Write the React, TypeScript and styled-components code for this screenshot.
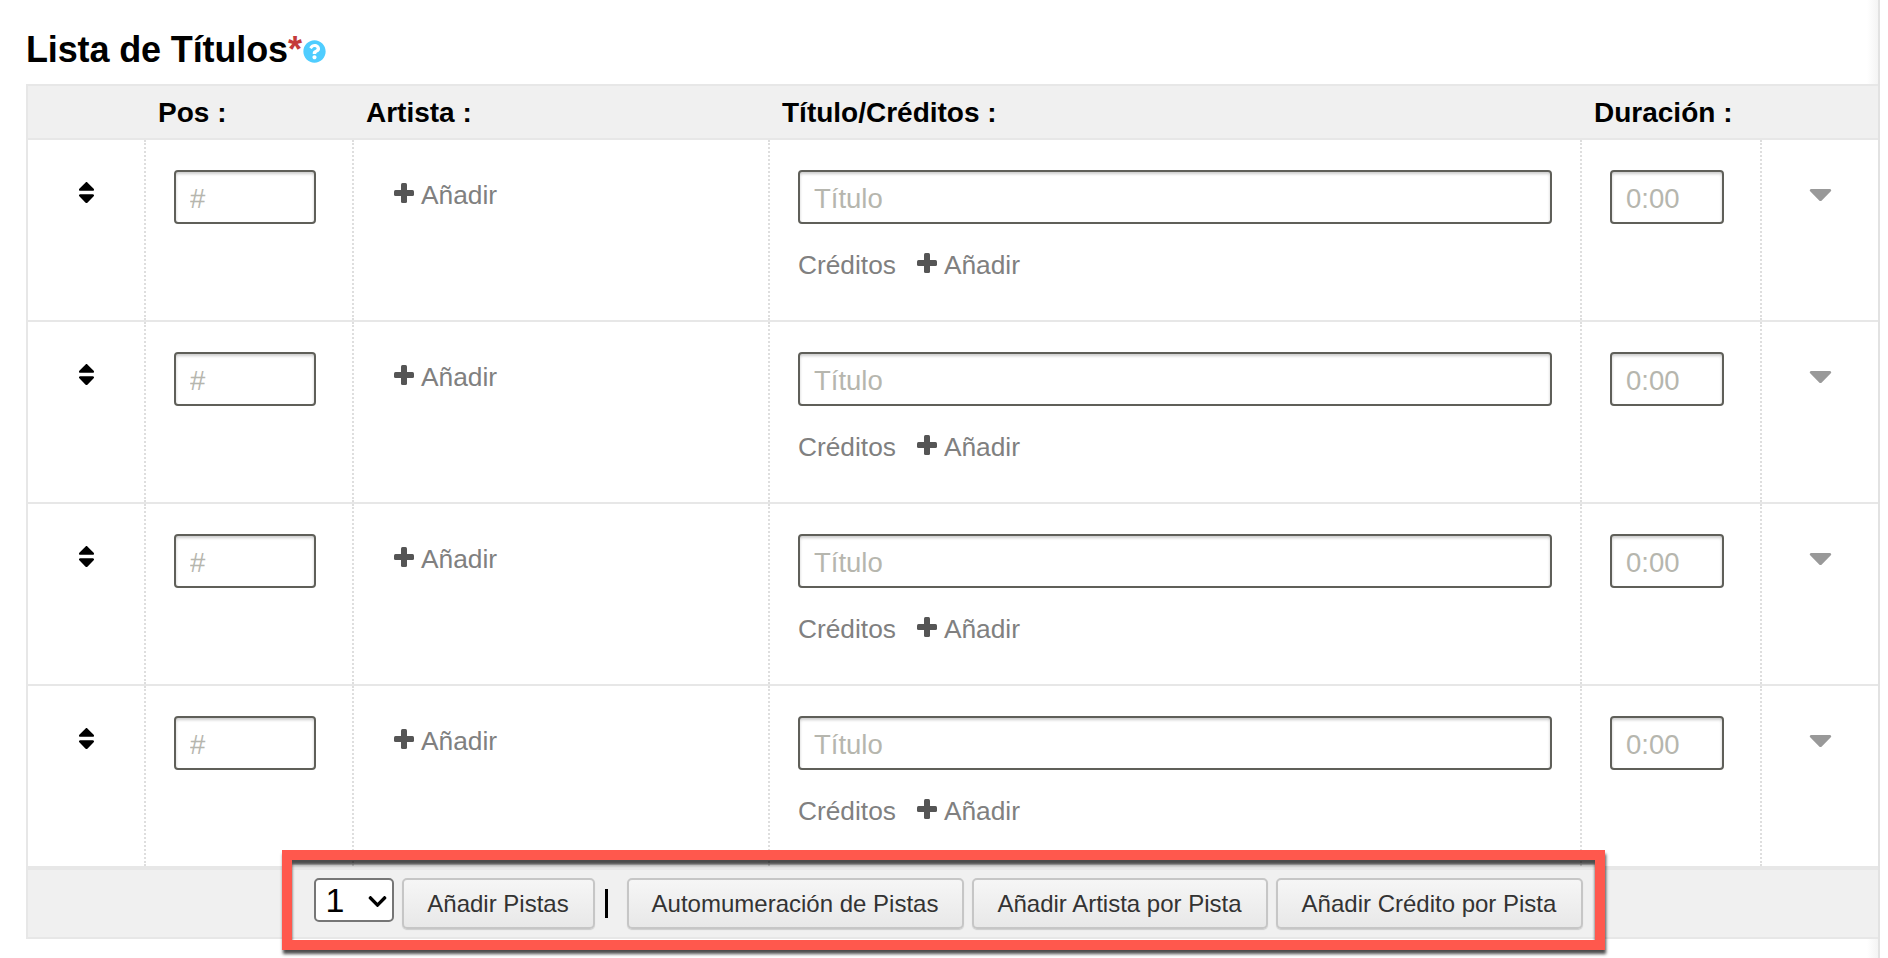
import React from "react";
import styled, { createGlobalStyle } from "styled-components";
import { FaCaretDown, FaChevronDown, FaQuestionCircle, FaSort } from "react-icons/fa";

const GlobalStyle = createGlobalStyle`
  html, body {
    margin: 0;
    padding: 0;
    background: #fff;
    overflow: hidden;
  }
  * {
    box-sizing: border-box;
  }
`;

const Page = styled.div`
  width: 1880px;
  height: 958px;
  padding: 28px 0 0 26px;
  border-right: 2px solid #e2e2e2;
  background: linear-gradient(to left, #f4f4f4, #fff 11px);
  font-family: "Liberation Sans", Arial, sans-serif;
  color: #000;
`;

const Heading = styled.h2`
  display: flex;
  align-items: center;
  height: 44px;
  margin: 0 0 12px;
  font-size: 36px;
  font-weight: 700;
  line-height: 44px;
  letter-spacing: -0.13px;
`;

const Star = styled.span`
  color: #c43a3a;
`;

const Help = styled(FaQuestionCircle)`
  width: 23px;
  height: 23px;
  margin: 3px 0 0 1px;
  color: #4fcdff;
`;

const Table = styled.div`
  position: relative;
  border-top: 2px solid #e7e7e7;
  border-left: 2px solid #e7e7e7;
  background: #fff;
`;

const columns = "116px 208px 416px 812px 180px 1fr";

const HeaderRow = styled.div`
  display: grid;
  grid-template-columns: ${columns};
  height: 54px;
  background: #f0f0f0;
  border-bottom: 2px solid #e7e7e7;
`;

const HeaderCell = styled.div`
  padding-left: 14px;
  font-size: 28px;
  font-weight: 700;
  line-height: 54px;
`;

const Row = styled.div`
  display: grid;
  grid-template-columns: ${columns};
  height: 182px;
  border-bottom: 2px solid #e7e7e7;

  &:last-of-type {
    height: 180px;
    border-bottom: 0;
  }
`;

const Cell = styled.div<{ $pad?: number }>`
  min-width: 0;
  padding: 30px 28px 0 ${(p) => p.$pad ?? 28}px;
  border-left: 2px dotted #dedede;
`;

const SortCell = styled.div`
  display: flex;
  justify-content: center;
  padding-top: 39px;
  font-size: 27px;
  line-height: 1;
`;

const CaretCell = styled(Cell)`
  display: flex;
  justify-content: center;
  padding: 35px 0 0;
  font-size: 37px;
  line-height: 1;
  color: #999;
`;

const TextInput = styled.input<{ $w?: number }>`
  display: block;
  width: ${(p) => (p.$w ? `${p.$w}px` : "100%")};
  height: 54px;
  padding: 4px 14px 0;
  border: 2px solid #5f5f59;
  border-radius: 4px;
  outline: 0;
  background: #fff;
  box-shadow: inset 0 2px 3px rgba(0, 0, 0, 0.2);
  font-family: inherit;
  font-size: 27.5px;
  color: #333;

  &::placeholder {
    color: #b6b6ae;
    opacity: 1;
  }
`;

const AddLink = styled.a`
  display: inline-flex;
  align-items: center;
  font-size: 26.3px;
  line-height: 30px;
  color: #808080;
`;

const PlusIcon = styled.svg`
  width: 20px;
  height: 20px;
  margin: -4px 7px 0 0;
  fill: #555;
`;

const ArtistAdd = styled.div`
  padding-top: 10px;
`;

const CreditsRow = styled.div`
  display: flex;
  align-items: center;
  gap: 21px;
  margin-top: 26px;
  font-size: 26.3px;
  line-height: 30px;
  color: #808080;
`;

const Footer = styled.div`
  position: relative;
  display: flex;
  justify-content: center;
  align-items: flex-start;
  height: 71px;
  padding: 8px 11px 0 0;
  background: #f0f0f0;
  border-top: 2px solid #e7e7e7;
  border-bottom: 2px solid #e7e7e7;
`;

const SelectWrap = styled.div`
  position: relative;
  width: 80px;
  height: 44px;
  margin: 0 8px 0 1px;

  svg {
    position: absolute;
    top: 13px;
    right: 6px;
    width: 21px;
    height: 21px;
    pointer-events: none;
  }
`;

const CountSelect = styled.select`
  width: 100%;
  height: 100%;
  padding: 0 0 0 10px;
  border: 2px solid #767676;
  border-radius: 5px;
  background: #fff;
  appearance: none;
  font-family: inherit;
  font-size: 34px;
  color: #000;
`;

const ActionButton = styled.button<{ $w: number }>`
  width: ${(p) => p.$w}px;
  height: 51px;
  padding: 0;
  border: 2px solid #c6c6c6;
  border-radius: 5px;
  background: linear-gradient(#f6f6f6, #e8e8e8);
  box-shadow: 0 1px 1px rgba(0, 0, 0, 0.15);
  font-family: inherit;
  font-size: 24px;
  color: #333;
`;

const Separator = styled.span`
  width: 3px;
  height: 29px;
  margin: 11px 19px 0 10px;
  background: #000;
`;

const ButtonGap = styled.span`
  width: 8px;
`;

// screenshot annotation sitting over the footer, not part of the form
const Highlight = styled.div`
  position: absolute;
  left: 254px;
  top: 764px;
  width: 1323px;
  height: 100px;
  border: 10px solid #ff584d;
  box-shadow: 1px 4px 3px rgba(0, 0, 0, 0.7), inset 0 5px 3px rgba(0, 0, 0, 0.7);
  pointer-events: none;
`;

const tracks = [0, 1, 2, 3];

function Add() {
  return (
    <AddLink>
      <PlusIcon viewBox="0 0 20 20">
        <rect x="7" y="0" width="6" height="20" rx="1.5" />
        <rect x="0" y="7" width="20" height="6" rx="1.5" />
      </PlusIcon>
      Añadir
    </AddLink>
  );
}

export default function App() {
  return (
    <Page>
      <GlobalStyle />
      <Heading>
        Lista de Títulos<Star>*</Star>
        <Help />
      </Heading>
      <Table>
        <HeaderRow>
          <span />
          <HeaderCell>Pos :</HeaderCell>
          <HeaderCell>Artista :</HeaderCell>
          <HeaderCell>Título/Créditos :</HeaderCell>
          <HeaderCell>Duración :</HeaderCell>
          <span />
        </HeaderRow>
        {tracks.map((t) => (
          <Row key={t}>
            <SortCell>
              <FaSort />
            </SortCell>
            <Cell>
              <TextInput placeholder="#" $w={142} />
            </Cell>
            <Cell $pad={40}>
              <ArtistAdd>
                <Add />
              </ArtistAdd>
            </Cell>
            <Cell>
              <TextInput placeholder="Título" />
              <CreditsRow>
                Créditos
                <Add />
              </CreditsRow>
            </Cell>
            <Cell>
              <TextInput placeholder="0:00" $w={114} />
            </Cell>
            <CaretCell>
              <FaCaretDown />
            </CaretCell>
          </Row>
        ))}
        <Footer>
          <SelectWrap>
            <CountSelect defaultValue="1">
              <option>1</option>
              <option>2</option>
              <option>3</option>
            </CountSelect>
            <FaChevronDown />
          </SelectWrap>
          <ActionButton $w={193}>Añadir Pistas</ActionButton>
          <Separator />
          <ActionButton $w={337}>Automumeración de Pistas</ActionButton>
          <ButtonGap />
          <ActionButton $w={296}>Añadir Artista por Pista</ActionButton>
          <ButtonGap />
          <ActionButton $w={307}>Añadir Crédito por Pista</ActionButton>
        </Footer>
        <Highlight />
      </Table>
    </Page>
  );
}
